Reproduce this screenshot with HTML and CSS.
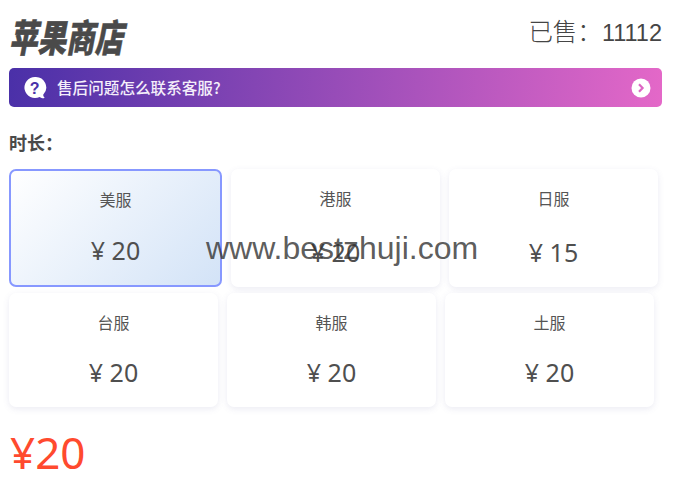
FILE: index.html
```html
<!DOCTYPE html>
<html lang="zh-CN">
<head>
<meta charset="utf-8">
<title>苹果商店</title>
<link rel="stylesheet" href="styles.css">
</head>
<body>
<main class="page">
  <header class="head">
    <h1 class="title">苹果商店</h1>
    <div class="sold"><span class="sold-label">已售：</span><span class="sold-value">11112</span></div>
  </header>
  <div class="notice">
    <svg class="q-icon" width="24" height="24" viewBox="0 0 24 24"><path fill="#fff" d="M12 1a10.5 10.5 0 1 0 4.6 19.9c1.6 1.2 3.6 1.5 5.2 1.2-1-.9-1.5-2-1.6-3.3A10.5 10.5 0 0 0 12 1z"/><text x="11.6" y="18" text-anchor="middle" class="q-mark">?</text></svg>
    <span class="notice-text">售后问题怎么联系客服?</span>
    <svg class="go-icon" width="20" height="20" viewBox="0 0 20 20"><circle cx="10" cy="10" r="9.5" fill="#fff"/><path d="M8 6.2 11.6 10 8 13.8" fill="none" stroke="#dd66c4" stroke-width="2.2"/></svg>
  </div>
  <div class="label">时长：</div>
  <div class="cards">
    <div class="card selected"><div class="name">美服</div><div class="price">¥ 20</div></div>
    <div class="card"><div class="name">港服</div><div class="price">¥ 20</div></div>
    <div class="card"><div class="name">日服</div><div class="price">¥ 15</div></div>
    <div class="card"><div class="name">台服</div><div class="price">¥ 20</div></div>
    <div class="card"><div class="name">韩服</div><div class="price">¥ 20</div></div>
    <div class="card"><div class="name">土服</div><div class="price">¥ 20</div></div>
  </div>
  <div class="total">¥20</div>
</main>
<div class="watermark">www.bestzhuji.com</div>
</body>
</html>
```
FILE: styles.css
```css
* { box-sizing: border-box; }
html, body { margin: 0; padding: 0; background: #fff; }
body {
  width: 683px;
  height: 501px;
  overflow: hidden;
  position: relative;
  color: #4a4a4a;
  font-family: "Noto Sans CJK SC", "Noto Sans", sans-serif;
}
.page { padding: 12px 21px 0 9px; }
.head { display: flex; justify-content: space-between; align-items: center; height: 48px; }
.title {
  margin: 0;
  font-size: 38px;
  line-height: 48px;
  font-weight: 900;
  font-style: italic;
  color: #4a4a4a;
  -webkit-text-stroke: .5px #4a4a4a;
  transform: scaleX(.75);
  transform-origin: 0 50%;
  width: 116px;
  white-space: nowrap;
}
.sold { font-family: "Liberation Sans", "Noto Sans CJK SC", sans-serif; font-weight: 300; margin-top: -3px; color: #454545; line-height: 34px; }
.sold-label { font-size: 24.5px; }
.sold-value { font-size: 23.5px; }
.notice {
  margin-top: 8px;
  height: 39px;
  border-radius: 5px;
  background: linear-gradient(95deg, #4a30a8 0%, #e468c8 100%);
  display: flex;
  align-items: center;
  padding: 0 11px 0 14px;
  color: #f4eefa;
  font-size: 15.6px;
  font-weight: 500;
}
.q-mark { font: 700 16px "Liberation Sans", sans-serif; fill: #4a30a8; }
.notice-text { margin-left: 10px; flex: 1; line-height: 36px; height: 38px; }
.label { margin-top: 23px; font-size: 18px; font-weight: 700; line-height: 24px; color: #4a4a4a; }
.cards { margin-top: 15px; display: flex; flex-wrap: wrap; gap: 6px 9px; }
.card {
  width: 209px;
  min-height: 114px;
  border-radius: 7px;
  background: #fff;
  box-shadow: 0 2px 6px rgba(90, 90, 160, .12);
  padding: 18px 0 18px;
  display: flex;
  flex-direction: column;
  justify-content: space-between;
  align-items: center;
  font-weight: 400;
}
.selected {
  width: 213px;
  min-height: 118px;
  border: 2px solid #8798ff;
  background: linear-gradient(135deg, #fff 0%, #d3e3f7 100%);
  box-shadow: none;
  padding: 17px 0 18px;
}
.name { font-size: 16px; line-height: 22px; color: #555; }
.price { font-family: "Noto Sans", "Noto Sans CJK SC", sans-serif; font-size: 25px; line-height: 34px; color: #4f4f4f; }
.total { margin-top: 18px; padding-left: 1px; font-family: "Noto Sans", "Noto Sans CJK SC", sans-serif; font-size: 44px; line-height: 54px; color: #ff4a2e; }
.watermark {
  position: absolute;
  left: 206px;
  top: 231px;
  font-family: "Liberation Sans", sans-serif;
  font-size: 32px;
  line-height: 34px;
  color: rgba(50, 50, 50, .8);
}
```
